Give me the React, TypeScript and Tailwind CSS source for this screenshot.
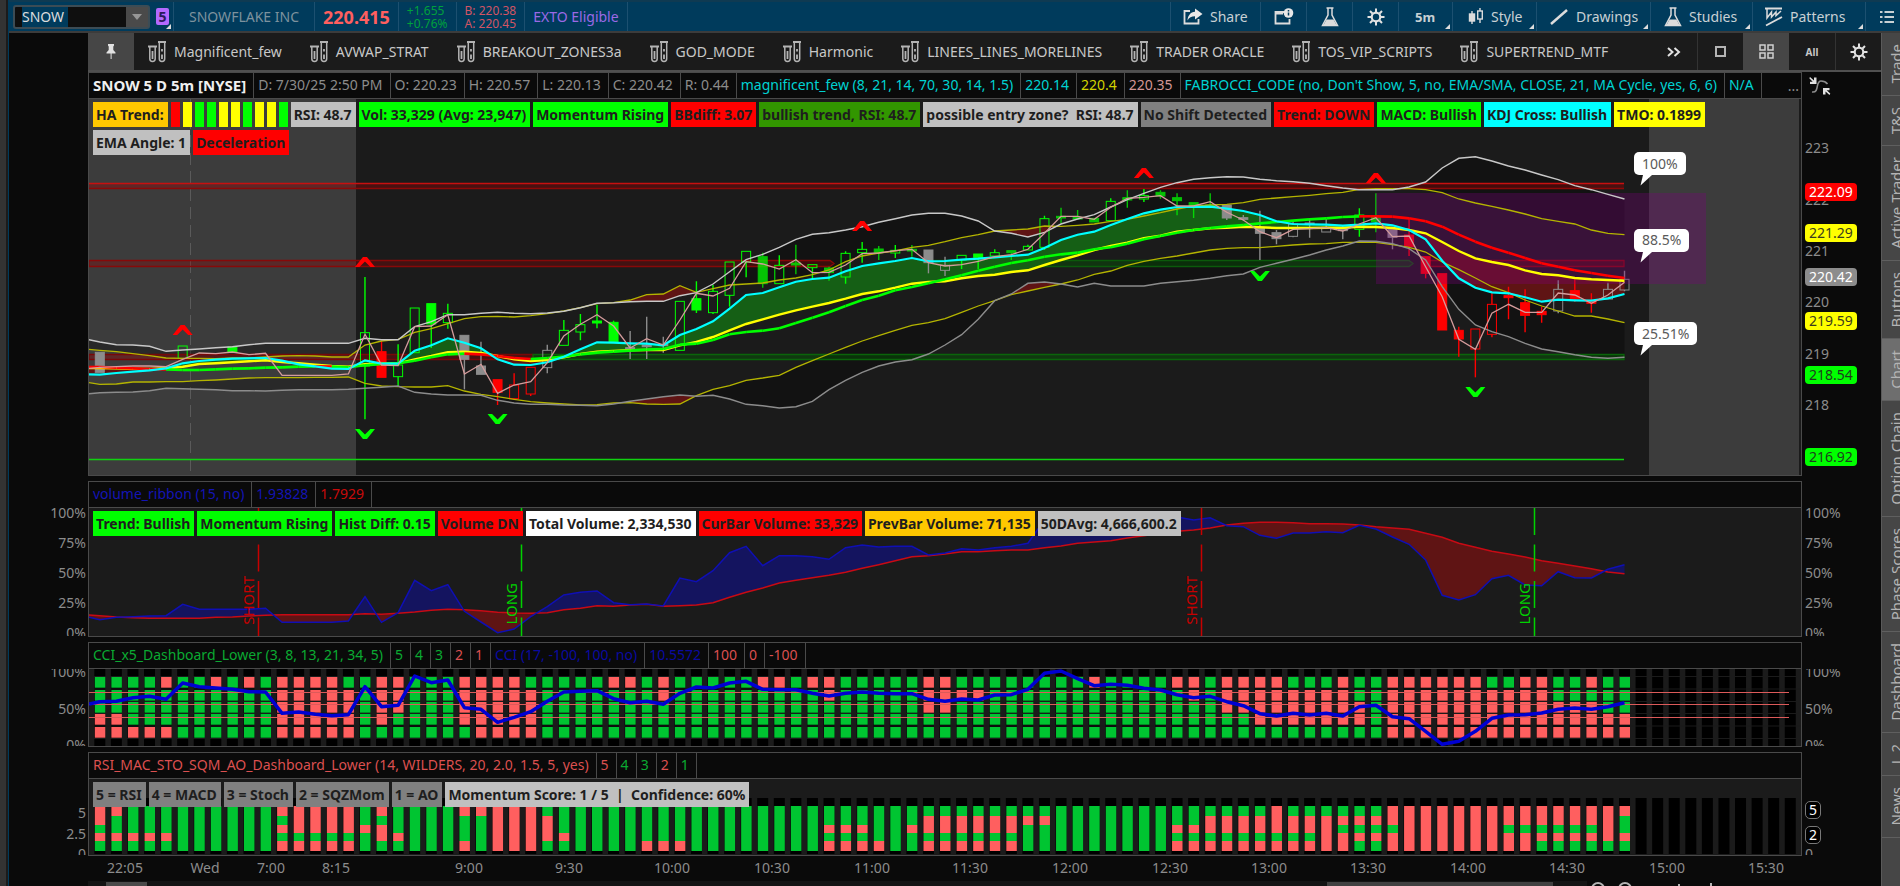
import React from "react";
import type { ReactNode } from "react";

/* ---------- series geometry ---------- */

const FIRST_X = 99.8;
const STEP = 16.573;
const px = (i: number) => FIRST_X + STEP * i;
const priceY = (v: number) => 150 + v / 3;
const lowerY = (v: number) => 470 + v / 3;

type Pt = [number, number];

const toPoints = (values: number[], scale: (v: number) => number): Pt[] =>
  values.map((v, i) => [i === 0 ? 89 : px(i - 1), scale(v)]);

const toAttr = (pts: Pt[]) => pts.map(([x, y]) => `${x.toFixed(1)},${y.toFixed(1)}`).join(" ");

/* Each array starts with the value at the left edge, then one value per bar. */
const bandUpper = [569, 576, 584, 585, 589, 604, 600, 597, 593, 590, 584, 580, 580, 580, 580, 580, 580, 565, 569, 569, 530, 515, 494, 494, 490, 487, 490, 491, 489, 484, 473, 460, 458, 455, 454, 454, 437, 428, 402, 365, 329, 313, 292, 268, 253, 248, 240, 230, 217, 206, 195, 190, 190, 198, 213, 243, 250, 261, 247, 222, 207, 194, 171, 149, 130, 112, 98, 88, 83, 80, 81, 88, 92, 95, 100, 107, 114, 119, 119, 119, 111, 96, 54, 25, 20, 33, 48, 60, 75, 89, 107, 119, 133, 147];
const channelUpper = [598, 601, 605, 611, 617, 624, 625, 625, 626, 624, 624, 621, 618, 617, 618, 621, 621, 585, 573, 568, 547, 536, 521, 506, 500, 499, 501, 497, 491, 483, 473, 461, 458, 450, 434, 432, 407, 427, 416, 405, 402, 399, 390, 384, 374, 360, 335, 318, 309, 303, 292, 286, 275, 263, 254, 243, 240, 237, 228, 229, 226, 222, 214, 208, 198, 188, 177, 168, 165, 163, 158, 148, 144, 140, 136, 131, 127, 118, 116, 116, 116, 119, 128, 147, 159, 169, 180, 192, 206, 214, 222, 240, 250, 254];
const channelLower = [698, 703, 702, 696, 696, 695, 695, 692, 690, 687, 684, 683, 683, 683, 682, 682, 681, 700, 708, 710, 711, 711, 707, 723, 733, 740, 748, 755, 759, 762, 765, 764, 759, 758, 762, 763, 762, 737, 718, 707, 691, 684, 676, 652, 632, 612, 592, 573, 557, 541, 526, 518, 506, 487, 468, 452, 434, 423, 412, 402, 390, 373, 363, 346, 334, 325, 318, 309, 300, 295, 293, 293, 289, 285, 282, 281, 277, 277, 277, 284, 292, 306, 336, 359, 384, 410, 428, 450, 468, 483, 498, 498, 507, 518];
const bandLower = [731, 728, 727, 726, 722, 715, 716, 718, 719, 722, 722, 723, 721, 719, 719, 719, 718, 715, 712, 708, 727, 732, 735, 735, 736, 751, 759, 763, 763, 765, 766, 767, 762, 754, 747, 740, 735, 739, 736, 747, 763, 767, 774, 770, 754, 719, 691, 667, 648, 636, 629, 612, 585, 554, 508, 452, 432, 400, 396, 402, 411, 400, 408, 408, 408, 400, 395, 391, 385, 377, 372, 352, 340, 328, 315, 300, 288, 273, 274, 281, 296, 330, 410, 478, 525, 545, 560, 580, 597, 605, 614, 622, 625, 622];
const emaFast = [673, 674, 669, 665, 661, 655, 640, 633, 629, 626, 625, 624, 632, 643, 649, 656, 657, 631, 641, 641, 602, 586, 565, 578, 595, 628, 644, 645, 637, 620, 598, 577, 578, 580, 581, 586, 555, 537, 514, 476, 435, 429, 412, 395, 387, 383, 364, 348, 340, 333, 324, 334, 333, 329, 326, 322, 318, 314, 294, 270, 254, 245, 225, 207, 190, 179, 171, 171, 170, 176, 183, 195, 214, 222, 223, 224, 227, 224, 220, 226, 240, 268, 332, 385, 413, 427, 430, 442, 455, 449, 451, 452, 445, 432];
const emaMid = [654, 654, 655, 656, 657, 655, 650, 642, 640, 637, 634, 631, 636, 640, 644, 648, 650, 643, 641, 640, 628, 618, 607, 605, 609, 618, 628, 633, 630, 622, 612, 605, 603, 601, 600, 600, 586, 576, 561, 541, 522, 508, 494, 481, 470, 459, 446, 432, 424, 413, 401, 396, 394, 385, 378, 374, 366, 361, 345, 330, 316, 300, 288, 278, 265, 257, 245, 240, 235, 233, 230, 232, 234, 234, 234, 233, 233, 230, 231, 234, 240, 250, 276, 303, 325, 336, 345, 361, 372, 376, 384, 388, 390, 392];
const emaSlow = [651, 651, 653, 655, 657, 658, 660, 660, 658, 656, 655, 653, 652, 650, 649, 650, 652, 646, 642, 640, 632, 622, 613, 611, 613, 618, 624, 627, 624, 620, 613, 608, 605, 602, 599, 597, 584, 581, 570, 553, 546, 542, 535, 519, 503, 487, 468, 450, 437, 421, 411, 400, 388, 376, 362, 350, 339, 331, 320, 313, 308, 298, 292, 281, 268, 258, 248, 240, 234, 229, 225, 220, 216, 212, 208, 205, 201, 199, 199, 200, 205, 214, 230, 254, 275, 293, 308, 324, 340, 350, 361, 369, 377, 384];
const closes = [655, 652, 650, 648, 648, 650, 628, 609, 611, 606, 614, 610, 676, 676, 676, 676, 672, 553, 645, 647, 530, 528, 494, 672, 643, 730, 705, 695, 638, 558, 523, 494, 528, 594, 566, 585, 510, 430, 438, 415, 335, 342, 357, 329, 368, 367, 345, 311, 309, 302, 298, 338, 348, 344, 334, 320, 314, 298, 250, 199, 199, 208, 172, 145, 142, 137, 168, 168, 155, 187, 210, 245, 263, 238, 236, 233, 243, 222, 203, 260, 258, 350, 440, 568, 598, 490, 463, 487, 487, 429, 435, 460, 435, 397];

const ribbonFast = [442, 449, 442, 440, 438, 437, 403, 418, 418, 418, 418, 415, 457, 457, 457, 457, 453, 380, 457, 428, 331, 362, 344, 424, 456, 488, 477, 440, 410, 375, 367, 363, 398, 404, 402, 408, 324, 335, 302, 248, 229, 287, 257, 257, 260, 268, 233, 225, 231, 229, 229, 255, 249, 236, 240, 233, 229, 220, 150, 140, 145, 150, 145, 148, 140, 142, 141, 150, 143, 167, 170, 196, 205, 189, 189, 185, 188, 166, 177, 201, 223, 270, 376, 390, 374, 326, 316, 345, 347, 305, 323, 324, 298, 284];
const ribbonSlow = [435, 437, 441, 443, 445, 445, 445, 445, 442, 441, 438, 436, 434, 434, 434, 434, 434, 431, 433, 430, 426, 421, 418, 419, 422, 427, 429, 430, 428, 419, 415, 407, 409, 405, 403, 409, 407, 405, 398, 382, 367, 354, 339, 331, 323, 316, 307, 295, 284, 272, 260, 257, 252, 245, 245, 242, 240, 240, 233, 228, 220, 216, 212, 204, 197, 190, 184, 180, 174, 165, 160, 157, 157, 158, 161, 161, 162, 165, 170, 174, 178, 190, 202, 220, 232, 244, 252, 261, 272, 280, 288, 296, 306, 311];
const cciLine = [702, 695, 694, 683, 679, 688, 639, 650, 654, 658, 665, 666, 730, 726, 733, 737, 734, 650, 710, 706, 618, 638, 630, 713, 718, 757, 742, 725, 694, 666, 664, 662, 686, 698, 694, 703, 670, 651, 654, 639, 634, 658, 659, 659, 670, 678, 670, 666, 670, 671, 671, 688, 694, 687, 690, 675, 674, 658, 610, 603, 626, 647, 643, 646, 655, 660, 674, 683, 679, 695, 707, 731, 738, 730, 735, 730, 738, 710, 706, 740, 746, 784, 823, 814, 784, 745, 735, 734, 729, 718, 714, 718, 710, 698];

type Candle = [number, number, number, number, number, "g" | "r" | "n", 0 | 1];
/* index, high, low, body top, body bottom, tone, filled */
const candles: Candle[] = [
  [0, 607, 667, 607, 667, "n", 1], [5, 588, 625, 588, 625, "g", 0], [8, 591, 607, 591, 607, "g", 1],
  [16, 381, 808, 548, 648, "g", 0], [17, 573, 682, 605, 682, "r", 1], [18, 583, 708, 645, 680, "g", 0],
  [19, 474, 608, 474, 608, "g", 0], [20, 461, 594, 461, 522, "g", 1], [21, 461, 536, 490, 518, "g", 0],
  [22, 556, 718, 556, 628, "n", 1], [23, 575, 673, 648, 673, "n", 1], [24, 689, 765, 689, 727, "r", 1],
  [25, 670, 746, 705, 746, "r", 0], [26, 652, 738, 652, 732, "r", 0], [27, 584, 670, 601, 653, "n", 0],
  [28, 510, 586, 541, 586, "g", 0], [29, 492, 571, 524, 546, "g", 0], [30, 464, 535, 513, 519, "g", 1],
  [31, 512, 575, 517, 575, "g", 1], [32, 543, 627, 593, 597, "n", 1], [33, 500, 627, 585, 590, "n", 1],
  [34, 560, 608, 583, 587, "n", 1], [35, 454, 601, 454, 601, "g", 0], [36, 394, 489, 446, 480, "g", 1],
  [37, 405, 492, 424, 488, "g", 0], [38, 336, 470, 336, 436, "g", 0], [39, 304, 382, 304, 336, "g", 0],
  [40, 308, 413, 320, 401, "g", 1], [41, 316, 401, 346, 401, "g", 0], [42, 284, 373, 339, 345, "g", 1],
  [43, 344, 385, 344, 353, "g", 0], [44, 350, 392, 354, 368, "g", 1], [45, 304, 401, 310, 381, "g", 0],
  [46, 276, 338, 298, 308, "g", 0], [47, 288, 330, 297, 308, "g", 1], [48, 285, 324, 301, 309, "g", 0],
  [49, 285, 320, 298, 303, "g", 1], [50, 300, 370, 300, 338, "n", 1], [51, 320, 378, 346, 361, "n", 0],
  [52, 316, 357, 316, 330, "g", 0], [53, 312, 357, 312, 322, "g", 1], [54, 298, 318, 308, 318, "g", 0],
  [55, 302, 330, 302, 308, "g", 1], [56, 284, 300, 289, 300, "g", 0], [57, 197, 300, 206, 292, "g", 0],
  [58, 173, 220, 199, 204, "g", 1], [59, 180, 207, 202, 207, "g", 1], [60, 205, 216, 205, 216, "g", 1],
  [61, 145, 212, 154, 212, "g", 0], [62, 121, 173, 143, 150, "g", 1], [63, 117, 156, 137, 147, "g", 0],
  [64, 121, 146, 127, 138, "g", 1], [65, 130, 196, 143, 152, "g", 1], [66, 158, 204, 158, 172, "g", 1],
  [67, 130, 172, 165, 172, "g", 1], [68, 165, 210, 165, 204, "n", 1], [69, 195, 212, 203, 208, "n", 1],
  [70, 182, 330, 235, 250, "n", 1], [71, 240, 283, 248, 266, "n", 1], [72, 213, 262, 222, 259, "n", 0],
  [73, 205, 263, 219, 223, "n", 1], [74, 207, 246, 232, 246, "n", 0], [75, 225, 268, 234, 242, "n", 1],
  [76, 175, 260, 195, 238, "g", 0], [77, 130, 247, 200, 215, "g", 1], [78, 237, 298, 237, 262, "n", 1],
  [79, 208, 318, 255, 290, "r", 1], [80, 320, 385, 320, 370, "r", 1], [81, 371, 540, 371, 540, "r", 1],
  [82, 530, 620, 541, 567, "r", 1], [83, 537, 682, 537, 597, "r", 0], [84, 430, 562, 463, 553, "r", 0],
  [85, 410, 508, 437, 443, "r", 1], [86, 418, 547, 458, 496, "r", 1], [87, 470, 518, 484, 494, "r", 1],
  [88, 391, 490, 418, 483, "n", 0], [89, 388, 455, 422, 446, "r", 1], [90, 430, 488, 455, 460, "r", 1],
  [91, 398, 447, 418, 447, "n", 0], [92, 362, 424, 388, 420, "n", 0],
];
const toneFill = { g: "#00ff00", r: "#ff0000", n: "#8c8c8c" };

/* Area between two lines, split where they cross. */
function areaBetween(a: Pt[], b: Pt[]) {
  const above: string[] = [];
  const below: string[] = [];
  for (let i = 0; i < a.length - 1; i++) {
    const [x0, a0] = a[i];
    const [x1, a1] = a[i + 1];
    const b0 = b[i][1];
    const b1 = b[i + 1][1];
    const d0 = b0 - a0;
    const d1 = b1 - a1;
    if (d0 * d1 >= 0) {
      (d0 + d1 >= 0 ? above : below).push(`M${x0} ${a0}L${x1} ${a1}L${x1} ${b1}L${x0} ${b0}Z`);
    } else {
      const t = d0 / (d0 - d1);
      const xc = x0 + (x1 - x0) * t;
      const yc = a0 + (a1 - a0) * t;
      (d0 > 0 ? above : below).push(`M${x0} ${a0}L${xc} ${yc}L${x0} ${b0}Z`);
      (d1 > 0 ? above : below).push(`M${xc} ${yc}L${x1} ${a1}L${x1} ${b1}Z`);
    }
  }
  return { above: above.join(""), below: below.join("") };
}

const pBandUpper = toPoints(bandUpper, priceY);
const pBandLower = toPoints(bandLower, priceY);
const pChanUpper = toPoints(channelUpper, priceY);
const pChanLower = toPoints(channelLower, priceY);
const pFast = toPoints(emaFast, priceY);
const pMid = toPoints(emaMid, priceY);
const pSlow = toPoints(emaSlow, priceY);
const pClose = toPoints(closes, priceY);
const upperSqueeze = areaBetween(pBandUpper, pChanUpper);
const lowerSqueeze = areaBetween(pChanLower, pBandLower);
const cloud = areaBetween(pFast, pMid);
const pRibFast = toPoints(ribbonFast, lowerY);
const pRibSlow = toPoints(ribbonSlow, lowerY);
const ribbon = areaBetween(pRibFast, pRibSlow);
const pCci = toPoints(cciLine, lowerY);

/* ---------- dashboards ---------- */

const cciRows = [
  "GGGGRGGRGRGRRRRGGRRGGGRRRRGGGGGRR" + "GRGGGGGRRGRRGGGGGRRGGGGGGGGRGGGGRRGRRR" + "RGGGRGGRRRRRRGGRRGGRGG",
  "GGGGGGGGGGGRRRRRGRRGGGRRRRRGGGGGG" + "GRGGGGGGGGGRGGGGGRRRRGGGGGGGGGGGGRGRRR" + "RRRRRGGRRRRRRRRRRGGGGG",
  "GGGGGGGGGGGRRRRRGRRGGGRRRRRGGGGGG" + "GGGGGGGGGGGGGGGGGRRGGGGGGGGGGGGGGGGRRR" + "RRRRRRGRRRRRRRRRRRRRGG",
  "RRGGGGGGGGGRRRRRGRGGGGRRRRRGGGGGG" + "GGGGGGGGGGGGGGGGGGGGGGGGGGGGGGGGGGGGGR" + "RRRRRRGRRRRRRRRRRRRRRR",
  "RRRRRGGGGGGRRRRRGGGGGGGRRRRGGGGGG" + "GGGGGGGGGGGGGGGGGGGGGGGGGGGGGGGGGGGGGG" + "GGGGGGGRRRRRRRRRRRRRRR",
];
const cciRowY = [677, 690, 702, 714, 727];

const span = (n: number, s: string) => Array<string>(n).fill(s);
const scoreCols = [
  "RRGRG", "RGGRG", ...span(3, "GGGRG"), ...span(6, "GGGGG"), "RGRGR", ...span(4, "RRRGR"), "GGRGG", "RGRRG", "GGGRG",
  ...span(3, "GGGGG"), "RGGGR", "RGGGG", ...span(3, "RRRRR"), "GRRRG", "GGGRG", ...span(4, "GGGGG"), ...span(3, "GGGGR"),
  ...span(8, "GGGGG"), ...span(3, "GGRGR"), "GGGGR", "GGGGG", "GGRGG", ...span(6, "GRRGR"), ...span(2, "GRGGG"),
  ...span(7, "GGGGG"), ...span(2, "GGRGR"), ...span(4, "GRRGR"), "RRRGR", ...span(2, "GRRGR"), "GRRRR", "GRGRR",
  ...span(2, "GRGRG"), "RRGRR", ...span(6, "RRRRR"), ...span(2, "RRGRR"), ...span(4, "RRGRG"), "RRRRG", "RGGRG",
];
const scoreY = [806, 816, 825, 833, 841, 851];
const UP = "#00c531";
const DOWN = "#ff5f5f";
const cellTone = (c: string) => (c === "G" ? UP : DOWN);
const allBars = Array.from({ length: 103 }, (_, i) => i);

/* ---------- icons ---------- */

const Tubes = () => (
  <svg viewBox="0 0 18 22" className="h-[22px] w-[18px] shrink-0" fill="none" stroke="#b4b4b4" strokeWidth="1.5">
    <path d="M0 5.500h9M10 1h8" strokeWidth="2" />
    <path d="M1.800 6v11.800a2.700 2.700 0 0 0 5.400 0V6M11.300 2v15.800a2.700 2.700 0 0 0 5.400 0V2" />
    <path d="M4.500 10v8M14 8v2.500M14 13.500v4.500" strokeWidth="1.800" />
  </svg>
);
const Flask = () => (
  <svg viewBox="0 0 18 20" className="h-5 w-[18px]" fill="none" stroke="#dcdcdc" strokeWidth="1.500">
    <path d="M5.500 1h7" />
    <path d="M7 1v7L1.500 18.500h15L11 8V1" />
    <path d="M5.500 12.500h7l3 5.500h-13z" fill="#dcdcdc" stroke="none" />
  </svg>
);
const Gear = ({ className }: { className: string }) => (
  <svg viewBox="0 0 18 18" className={className} stroke="#e2e2e2" fill="none">
    <circle cx="9" cy="9" r="4.300" strokeWidth="2.200" />
    {[0, 45, 90, 135, 180, 225, 270, 315].map((a) => (
      <path key={a} d="M9 4V0.500" strokeWidth="2" transform={`rotate(${a} 9 9)`} />
    ))}
  </svg>
);
const ShareIcon = () => (
  <svg viewBox="0 0 20 17" className="h-[17px] w-5">
    <path d="M7 3H1.500v12.500h14V11" fill="none" stroke="#dcdcdc" strokeWidth="1.800" />
    <path d="M12 0.500l7.500 5.500-7.500 5.500V8.300C8.500 8.300 6 9.500 4.500 12.500 4.800 7.500 7.500 4 12 3.700z" fill="#e8e8e8" />
  </svg>
);
const NoteIcon = () => (
  <svg viewBox="0 0 20 17" className="h-[17px] w-5">
    <path d="M10 4H1.500v11.500h14V11M1.500 5.500H9" fill="none" stroke="#dcdcdc" strokeWidth="1.800" />
    <circle cx="14.500" cy="5" r="4.800" fill="#e8e8e8" />
    <path d="M14.500 4.500v3M14.500 2v1.400" stroke="#003b5c" strokeWidth="1.500" />
  </svg>
);
const CandleIcon = () => (
  <svg viewBox="0 0 16 17" className="h-[17px] w-4" fill="none" stroke="#dcdcdc" strokeWidth="1.400">
    <path d="M4 3v13" />
    <rect x="1.500" y="6" width="5" height="7" fill="#dcdcdc" />
    <path d="M12 0v3M12 11v4" />
    <rect x="9.700" y="3" width="4.600" height="8" />
  </svg>
);
const LineIcon = () => (
  <svg viewBox="0 0 20 18" className="h-[18px] w-5">
    <path d="M2 16L18 2" stroke="#dcdcdc" strokeWidth="2.500" />
  </svg>
);
const PatternIcon = () => (
  <svg viewBox="0 0 18 20" className="h-5 w-[18px]" fill="none" stroke="#dcdcdc" strokeWidth="1.800">
    <path d="M0 1.500h17M1 18.500L17 10" />
    <path d="M2 2v9l4.500-6v5L11 5v3.500L16 4" strokeWidth="1.500" />
  </svg>
);
const ListIcon = () => (
  <svg viewBox="0 0 14 14" className="h-[14px] w-[14px]" stroke="#c8d0d4" strokeWidth="2">
    <path d="M0 2h2.500M0 7h2.500M0 12h2.500M4.500 2H14M4.500 7H14M4.500 12H14" />
  </svg>
);
const PinIcon = () => (
  <svg viewBox="0 0 10 16" className="h-4 w-[10px]" fill="#e2e2e2">
    <path d="M2 0h6v1.500L7.300 2.500V6l2.200 2.500V9.500H5.600V15h-1V9.500H0.500V8.500L2.700 6V2.500L2 1.500z" />
  </svg>
);
const GridIcon = () => (
  <svg viewBox="0 0 15 15" className="h-[15px] w-[15px]" fill="none" stroke="#d0d0d0" strokeWidth="1.500">
    <path d="M1 1h5v5H1zM9 1h5v5H9zM1 9h5v5H1zM9 9h5v5H9z" />
  </svg>
);
const ReturnIcon = () => (
  <svg viewBox="0 0 22 20" className="h-5 w-[22px]">
    <path d="M3 16c8 1 3-11 9-11 3 0 5 1 6.500 3" fill="none" stroke="#8c8c8c" strokeWidth="1.600" />
    <path d="M1 1l4 3.500V1.500h2.500V8H1V5.800h2.700L0.300 2.300zM20.500 19l-4-3.500v3H14V12h6.500v2.200h-2.800l3.600 3.400z" fill="#e2e2e2" />
  </svg>
);
const Corner = () => (
  <svg viewBox="0 0 5 5" className="absolute right-[2px] bottom-[2px] h-[5px] w-[5px]">
    <path d="M5 0v5H0z" fill="#dcdcdc" />
  </svg>
);

/* ---------- building blocks ---------- */

function Tool({ icon, label, corner, className }: { icon?: ReactNode; label?: string; corner?: boolean; className: string }) {
  return (
    <button type="button" aria-label={label ?? "Tool"} className={`relative flex h-full items-center gap-[7px] border-l border-[#1c5070] ${className}`}>
      {icon}
      {label && <span>{label}</span>}
      {corner && <Corner />}
    </button>
  );
}

function Cell({ children, className }: { children: ReactNode; className: string }) {
  return <span className={`flex h-full shrink-0 items-center border-r border-[#4a4a4a] pr-[7px] pb-[2px] pl-1 whitespace-pre ${className}`}>{children}</span>;
}

function Tag({ children, className }: { children: ReactNode; className: string }) {
  return <span className={`flex h-[25px] shrink-0 items-center pr-1 pl-[3px] font-bold whitespace-pre text-[#1e1e1e] ${className}`}>{children}</span>;
}

type AxisMark = { at: number; text: string; badge?: string };

function Axis({ side, marks, top, height, corner }: { side: "left" | "right"; marks: AxisMark[]; top: number; height: number; corner?: ReactNode }) {
  return (
    <div className="flex w-[79px] shrink-0 flex-col text-[#8c8c8c]">
      <div className="flex h-[27px] shrink-0 items-center pl-[7px]">{corner}</div>
      <div className="relative mb-px grow overflow-hidden">
        {marks.map((m) => (
          <span
            key={m.text}
            className={`absolute -translate-y-1/2 ${side === "left" ? "right-[2px]" : "left-[3px]"} ${m.badge ?? ""}`}
            style={{ top: `${((m.at - top) / height) * 100}%` }}
          >
            {m.text}
          </span>
        ))}
      </div>
    </div>
  );
}

type PaneProps = {
  className: string;
  header: ReactNode;
  left: AxisMark[];
  right: AxisMark[];
  top: number;
  height: number;
  corner?: ReactNode;
  overlay?: ReactNode;
  label: string;
  children: ReactNode;
};

function Pane({ className, header, left, right, top, height, corner, overlay, label, children }: PaneProps) {
  return (
    <section aria-label={label} className={`flex ${className}`}>
      <Axis side="left" marks={left} top={top} height={height} />
      <div className="flex min-w-0 grow flex-col border border-[#4a4a4a]">
        <div className="flex h-[26px] shrink-0 items-center overflow-hidden border-b border-[#4a4a4a] bg-[#0a0a0a]">{header}</div>
        <div className="relative min-h-0 grow overflow-hidden bg-[#1b1b1b]">
          <svg viewBox={`89 ${top} 1712 ${height}`} preserveAspectRatio="none" className="absolute inset-0 h-full w-full">
            {children}
          </svg>
          {overlay}
        </div>
      </div>
      <Axis side="right" marks={right} top={top} height={height} corner={corner} />
    </section>
  );
}

function Callout({ x, y, children }: { x: number; y: number; children: string }) {
  return (
    <div className="absolute" style={{ left: `${((x - 89) / 1712) * 100}%`, top: `${((y - 99) / 376) * 100}%` }}>
      <div className="flex h-[23px] items-center rounded-[5px] bg-white px-2 text-[#5a5a5a]">{children}</div>
      <svg viewBox="0 0 12 11" className="ml-[6px] h-[11px] w-3">
        <path d="M3 0h9L0.500 10.500z" fill="#fff" />
      </svg>
    </div>
  );
}

function SignalText({ x, className, children }: { x: number; className: string; children: string }) {
  return (
    <span
      className={`absolute bottom-[11px] rotate-180 text-[15px] leading-5 [writing-mode:vertical-rl] ${className}`}
      style={{ right: `${((1801 - x) / 1712) * 100}%` }}
    >
      {children}
    </span>
  );
}

/* ---------- charts ---------- */

function PriceChart() {
  const slowRed = (i: number) => i <= 3 || (i >= 22 && i <= 25) || i >= 76;
  return (
    <>
      <rect x="89" y="99" width="267" height="376" fill="#3c3c3c" />
      <rect x="1649" y="99" width="150" height="376" fill="#3c3c3c" />
      <path d="M190.500 99V475" stroke="#5a5a5a" strokeDasharray="12 6" />
      <path d={upperSqueeze.above + lowerSqueeze.above} fill="#000" fillOpacity="0.300" />
      <path d={upperSqueeze.below + lowerSqueeze.below} fill="#5f1414" />

      <rect x="89" y="184" width="1535" height="5" fill="#a00000" fillOpacity="0.350" />
      <path d="M89 183.500H1624" stroke="#c81010" strokeWidth="1.600" />
      <path d="M89 188.500H1624" stroke="#8c0808" strokeWidth="1.500" />
      <path d="M89 260.500H830l4 3-4 3H89zM1424 260.500h200v6h-200z" fill="#a00000" fillOpacity="0.300" stroke="#870808" strokeWidth="1.300" />
      <path d="M925 260.500H1409l4 3-4 3H925z" fill="#006400" fillOpacity="0.350" stroke="#0b5a0b" strokeWidth="1.300" />
      <path d="M89 354.500H533v5H89z" fill="#a00000" fillOpacity="0.350" stroke="#780808" strokeWidth="1.300" />
      <path d="M533 354.500H1624v5H533z" fill="#006400" fillOpacity="0.400" stroke="#0a640a" strokeWidth="1.300" />
      <path d="M89 459.500H1624" stroke="#10d210" strokeWidth="1.500" />

      <path d={cloud.above} fill="#155f15" />
      <path d={cloud.below} fill="#5f1414" />

      {candles.map(([i, hi, lo, top, bottom, tone, filled]) => {
        const color = toneFill[tone];
        const x = px(i);
        const y0 = priceY(top);
        const y1 = priceY(bottom);
        return (
          <g key={i} stroke={color} opacity={tone === "g" && filled && i > 39 && i !== 53 ? 0.75 : 1}>
            <path d={`M${x} ${priceY(hi)}V${y0}M${x} ${y1}V${priceY(lo)}`} strokeWidth="1.400" />
            <rect x={x - 4.5} y={y0} width="9" height={Math.max(1, y1 - y0)} fill={filled ? color : "none"} strokeWidth="1" />
          </g>
        );
      })}

      <rect x="1376" y="193" width="330" height="91" fill="#800080" fillOpacity="0.300" />

      <g fill="none">
        <polyline points={toAttr(pChanLower)} stroke="#b4b400" strokeWidth="1.300" />
        <polyline points={toAttr(pChanUpper)} stroke="#b4b400" strokeWidth="1.300" />
        <polyline points={toAttr(pBandLower)} stroke="#8c8c8c" strokeWidth="1.400" />
        <polyline points={toAttr(pBandUpper)} stroke="#c8c8c8" strokeWidth="1.400" />
        <polyline points={toAttr(pMid)} stroke="#ffff00" strokeWidth="2.400" />
        {pSlow.slice(0, -1).map((p, i) => (
          <path key={i} d={`M${p[0]} ${p[1]}L${pSlow[i + 1][0]} ${pSlow[i + 1][1]}`} stroke={slowRed(i - 1) || i === 14 ? "#ff0000" : "#00ff00"} strokeWidth="2.600" />
        ))}
        <polyline points={toAttr(pFast)} stroke="#00ffff" strokeWidth="2.200" />
        <polyline points={toAttr(pClose)} stroke="#d49c9c" strokeWidth="1.300" />
      </g>

      {([[5, 325], [16, 257], [46, 221], [63, 168], [77, 173]] as Pt[]).map(([i, y]) => (
        <path key={i} d={`M${px(i) - 10} ${y + 10}L${px(i) - 2} ${y}H${px(i) + 2}L${px(i) + 10} ${y + 10}H${px(i) + 5.5}L${px(i)} ${y + 4.5}L${px(i) - 5.5} ${y + 10}Z`} fill="#ff0000" />
      ))}
      {([[16, 429], [24, 414], [70, 271], [83, 387]] as Pt[]).map(([i, y]) => (
        <path key={i} d={`M${px(i) - 10} ${y}L${px(i) - 2} ${y + 10}H${px(i) + 2}L${px(i) + 10} ${y}H${px(i) + 5.5}L${px(i)} ${y + 5.5}L${px(i) - 5.5} ${y}Z`} fill="#00ff00" />
      ))}
    </>
  );
}

function RibbonChart() {
  return (
    <>
      <path d={ribbon.above} fill="#14145f" />
      <path d={ribbon.below} fill="#5f1414" />
      <polyline points={toAttr(pRibSlow)} fill="none" stroke="#c80a14" strokeWidth="1.500" />
      <polyline points={toAttr(pRibFast)} fill="none" stroke="#0f0fb4" strokeWidth="1.500" />
      <path d="M258.500 508V637M1201.500 508V637" stroke="#c80000" strokeWidth="1.500" strokeDasharray="27 9.500" />
      <path d="M521.500 508V637M1534.500 508V637" stroke="#00d200" strokeWidth="1.500" strokeDasharray="27 9.500" />
    </>
  );
}

function CciChart() {
  return (
    <>
      {allBars.map((i) => (
        <g key={i}>
          <rect x={px(i) - 5.5} y="669" width="11" height="77" fill="#000" />
          {i < 93 && cciRows.map((row, r) => <rect key={r} x={px(i) - 5} y={cciRowY[r]} width="10.500" height="10.700" fill={cellTone(row[i])} />)}
        </g>
      ))}
      <path d="M89 676.500H1801M89 689H1801M89 701.500H1801M89 713.500H1801M89 726H1801M89 738.500H1801" stroke="#1b1b1b" strokeWidth="1" />
      <path d="M89 692.500H1789M89 704.500H1789M89 717.500H1789" stroke="#dc5a5a" strokeWidth="1.200" />
      <polyline points={toAttr(pCci)} fill="none" stroke="#0000d2" strokeWidth="3.500" strokeLinejoin="round" />
    </>
  );
}

function ScoreChart() {
  return (
    <>
      {allBars.map((i) => (
        <g key={i}>
          <rect x={px(i) - 5.5} y="798" width="11" height="56" fill="#000" />
          {scoreCols[i]?.split("").map((c, r) => (
            <rect key={r} x={px(i) - 5} y={scoreY[r]} width="10.500" height={scoreY[r + 1] - scoreY[r]} fill={cellTone(c)} />
          ))}
        </g>
      ))}
    </>
  );
}

/* ---------- page data ---------- */

const tabs = ["Magnificent_few", "AVWAP_STRAT", "BREAKOUT_ZONES3a", "GOD_MODE", "Harmonic", "LINEES_LINES_MORELINES", "TRADER ORACLE", "TOS_VIP_SCRIPTS", "SUPERTREND_MTF"];
const sideTabs = ["Trade", "T&S", "Active Trader", "Buttons", "Chart", "Option Chain", "Phase Scores", "Dashboard", "L 2", "News"];
const times: [number, string][] = [
  [125, "22:05"], [205, "Wed"], [271, "7:00"], [336, "8:15"], [469, "9:00"], [569, "9:30"], [672, "10:00"], [772, "10:30"], [872, "11:00"],
  [970, "11:30"], [1070, "12:00"], [1170, "12:30"], [1269, "13:00"], [1368, "13:30"], [1468, "14:00"], [1567, "14:30"], [1667, "15:00"], [1766, "15:30"],
];
const haTrend = ["r", "y", "g", "g", "y", "y", "g", "y", "y", "g"];
const haTone: Record<string, string> = { r: "bg-[#ff0000]", y: "bg-[#ffff00]", g: "bg-[#00ff00]" };

const badge = "rounded-[4px] px-1 leading-[18px]";
const priceMarks: AxisMark[] = [
  { at: 148, text: "223" },
  { at: 200, text: "222" },
  { at: 251, text: "221" },
  { at: 302, text: "220" },
  { at: 354, text: "219" },
  { at: 405, text: "218" },
  { at: 192, text: "222.09", badge: `${badge} bg-[#ff0000] text-white` },
  { at: 233, text: "221.29", badge: `${badge} bg-[#ffff00] text-[#3c3c1e]` },
  { at: 277, text: "220.42", badge: `${badge} bg-[#8c8c8c] text-white` },
  { at: 321, text: "219.59", badge: `${badge} bg-[#ffff00] text-[#3c3c1e]` },
  { at: 375, text: "218.54", badge: `${badge} bg-[#00ff00] text-[#1e3c1e]` },
  { at: 457, text: "216.92", badge: `${badge} bg-[#00ff00] text-[#1e3c1e]` },
];
const volMarks: AxisMark[] = [
  { at: 513, text: "100%" },
  { at: 543, text: "75%" },
  { at: 573, text: "50%" },
  { at: 603, text: "25%" },
  { at: 633, text: "0%" },
];
const cciMarks: AxisMark[] = [
  { at: 672, text: "100%" },
  { at: 709, text: "50%" },
  { at: 745, text: "0%" },
];
const outline = "rounded-[5px] border border-[#787878] bg-black px-[3px] leading-4 text-white";

export default function App() {
  return (
    <div className="flex min-h-screen w-full overflow-hidden bg-[#0a0a0a] font-['Noto_Sans','Open_Sans',sans-serif] text-[14px] leading-5 text-[#b4b4b4]">
      <div className="w-2 shrink-0 border-r-2 border-[#1b1b1b] bg-[#333333]" />
      <div className="flex min-w-0 grow flex-col border-l border-[#003b5c]">
        <header className="flex h-[33px] shrink-0 items-center border-t-2 border-b-2 border-t-[#0f3a52] border-b-[#3c3c3c] bg-[#003b5c]">
          <div className="ml-1 flex h-6 w-[137px] shrink-0 items-center rounded-[3px] border-2 border-[#3c4c55] bg-[#0f0f0f] pl-[7px]">
            <label htmlFor="symbol" className="sr-only">Symbol</label>
            <input id="symbol" defaultValue="SNOW" className="h-5 w-[46px] bg-[#003b5c] text-[#dcdcdc] outline-none" />
            <button type="button" aria-label="Open symbol list" className="ml-auto flex h-5 w-[22px] items-center justify-center bg-[#4a4a4a]">
              <svg viewBox="0 0 10 6" className="h-[6px] w-[10px]"><path d="M0 0h10L5 6z" fill="#969696" /></svg>
            </button>
          </div>
          <div className="relative flex h-full w-6 shrink-0 items-center border-r border-[#1c5070] pl-[6px]">
            <button type="button" aria-label="Link group 5" className="flex h-[17px] w-[13px] items-center justify-center rounded-[2px] bg-[#b469ff] font-bold text-[#2a1a5a]">5</button>
            <Corner />
          </div>
          <div className="flex h-full shrink-0 items-center border-r border-[#1c5070] px-[15px] text-[#7d929e]">SNOWFLAKE INC</div>
          <div className="flex h-full shrink-0 items-center border-r border-[#1c5070] px-2 text-[18px] font-bold text-[#ff5f5f]">220.415</div>
          <div className="flex h-full shrink-0 flex-col justify-center border-r border-[#1c5070] px-2 text-[12px] leading-[13px] text-[#00a03c]">
            <span>+1.655</span>
            <span>+0.76%</span>
          </div>
          <div className="flex h-full shrink-0 flex-col justify-center border-r border-[#1c5070] px-2 text-[12px] leading-[13px] text-[#d25564]">
            <span>B: 220.38</span>
            <span>A: 220.45</span>
          </div>
          <div className="flex h-full shrink-0 items-center border-r border-[#1c5070] px-2 text-[#9b69e6]">EXTO Eligible</div>
          <div className="ml-auto flex h-full shrink-0 items-center text-[#c8d0d4]">
            <Tool icon={<ShareIcon />} label="Share" className="w-[90px] pl-3" />
            <Tool icon={<NoteIcon />} className="w-[46px] justify-center" />
            <Tool icon={<Flask />} className="w-[46px] justify-center" />
            <Tool icon={<Gear className="h-[18px] w-[18px]" />} className="w-[46px] justify-center" />
            <Tool label="5m" corner className="w-[54px] pl-4 text-[13px] font-bold" />
            <Tool icon={<CandleIcon />} label="Style" corner className="w-[84px] pl-[15px]" />
            <Tool icon={<LineIcon />} label="Drawings" corner className="w-[114px] pl-3" />
            <Tool icon={<Flask />} label="Studies" corner className="w-[102px] pl-[13px]" />
            <Tool icon={<PatternIcon />} label="Patterns" corner className="w-[113px] pl-3" />
            <Tool icon={<ListIcon />} className="w-[35px] pl-[14px]" />
          </div>
        </header>

        <div className="flex min-h-0 grow">
          <div className="flex min-w-0 grow flex-col">
            <nav aria-label="Studies sets" className="ml-[79px] flex h-[39px] shrink-0 items-center border-b-2 border-[#505050] bg-[#1b1b1b] text-[#c8c8c8]">
              <button type="button" aria-label="Pin" className="mr-[14px] flex h-full w-[46px] shrink-0 items-center justify-center bg-[#464646]"><PinIcon /></button>
              <div className="flex min-w-0 grow items-center gap-7 overflow-hidden">
                {tabs.map((t) => (
                  <button key={t} type="button" className="flex shrink-0 items-center gap-2"><Tubes />{t}</button>
                ))}
              </div>
              <button type="button" aria-label="More sets" className="flex h-full w-[46px] shrink-0 items-center justify-center">
                <svg viewBox="0 0 14 10" className="h-[10px] w-[14px]" fill="none" stroke="#e2e2e2" strokeWidth="2"><path d="M1 1l4.500 4L1 9M7.500 1L12 5 7.500 9" /></svg>
              </button>
              <button type="button" aria-label="Single view" className="flex h-full w-[46px] shrink-0 items-center justify-center border-l border-[#333333]">
                <span className="h-[11px] w-[11px] border-2 border-[#b4b4b4]" />
              </button>
              <button type="button" aria-label="Grid view" className="flex h-full w-[46px] shrink-0 items-center justify-center bg-[#464646]"><GridIcon /></button>
              <button type="button" className="flex h-full w-[46px] shrink-0 items-center justify-center text-[10px] font-bold">All</button>
              <button type="button" aria-label="Settings" className="flex h-full w-[46px] shrink-0 items-center justify-center border-l border-[#333333]"><Gear className="h-[18px] w-[18px]" /></button>
            </nav>

            <main className="flex grow flex-col gap-[5px]">
              <Pane
                label="SNOW price"
                className="grow basis-[404px]"
                top={99}
                height={376}
                left={[]}
                right={priceMarks}
                corner={<ReturnIcon />}
                header={
                  <>
                    <Cell className="text-[15px] font-bold text-[#f0f0f0]">SNOW 5 D 5m [NYSE]</Cell>
                    <Cell className="text-[#8c8c8c]">D: 7/30/25 2:50 PM</Cell>
                    <Cell className="text-[#8c8c8c]">O: 220.23</Cell>
                    <Cell className="text-[#8c8c8c]">H: 220.57</Cell>
                    <Cell className="text-[#8c8c8c]">L: 220.13</Cell>
                    <Cell className="text-[#8c8c8c]">C: 220.42</Cell>
                    <Cell className="text-[#8c8c8c]">R: 0.44</Cell>
                    <Cell className="text-[#00d2d2]">magnificent_few (8, 21, 14, 70, 30, 14, 1.5)</Cell>
                    <Cell className="text-[#00d2d2]">220.14</Cell>
                    <Cell className="text-[#d2d200]">220.4</Cell>
                    <Cell className="text-[#d29696]">220.35</Cell>
                    <Cell className="text-[#00d2d2]">FABROCCI_CODE (no, Don't Show, 5, no, EMA/SMA, CLOSE, 21, MA Cycle, yes, 6, 6)</Cell>
                    <Cell className="text-[#00d2d2]">N/A</Cell>
                    <span className="ml-auto pr-[2px] text-[#8c8c8c]">...</span>
                  </>
                }
                overlay={
                  <>
                    <div className="absolute top-[3px] left-[4px] flex flex-col gap-[3px]">
                      <div className="flex gap-[3px]">
                        <Tag className="bg-[#ffc800]">HA Trend:</Tag>
                        <div className="flex gap-[3px]">
                          {haTrend.map((t, i) => <span key={i} className={`h-[25px] w-[9px] ${haTone[t]}`} />)}
                        </div>
                        <Tag className="bg-[#c0c0c0]">RSI: 48.7</Tag>
                        <Tag className="bg-[#00ff00]">Vol: 33,329 (Avg: 23,947)</Tag>
                        <Tag className="bg-[#00ff00]">Momentum Rising</Tag>
                        <Tag className="bg-[#ff0000]">BBdiff: 3.07</Tag>
                        <Tag className="bg-[#329600]">bullish trend, RSI: 48.7</Tag>
                        <Tag className="bg-[#c0c0c0]">possible entry zone?  RSI: 48.7</Tag>
                        <Tag className="bg-[#808080]">No Shift Detected</Tag>
                        <Tag className="bg-[#ff0000]">Trend: DOWN</Tag>
                        <Tag className="bg-[#00ff00]">MACD: Bullish</Tag>
                        <Tag className="bg-[#00ffff]">KDJ Cross: Bullish</Tag>
                        <Tag className="bg-[#ffff00]">TMO: 0.1899</Tag>
                      </div>
                      <div className="flex gap-[3px]">
                        <Tag className="bg-[#c0c0c0]">EMA Angle: 1</Tag>
                        <Tag className="bg-[#ff0000]">Deceleration</Tag>
                      </div>
                    </div>
                    <Callout x={1634} y={152}>100%</Callout>
                    <Callout x={1634} y={229}>88.5%</Callout>
                    <Callout x={1634} y={322}>25.51%</Callout>
                  </>
                }
              >
                <PriceChart />
              </Pane>

              <Pane
                label="Volume ribbon"
                className="grow basis-[156px]"
                top={508}
                height={128}
                left={volMarks}
                right={volMarks}
                header={
                  <>
                    <Cell className="text-[#1414b4]">volume_ribbon (15, no)</Cell>
                    <Cell className="text-[#1414b4]">1.93828</Cell>
                    <Cell className="text-[#c80a0a]">1.7929</Cell>
                  </>
                }
                overlay={
                  <>
                    <div className="absolute top-[3px] left-[4px] flex gap-[3px]">
                      <Tag className="bg-[#00ff00]">Trend: Bullish</Tag>
                      <Tag className="bg-[#00ff00]">Momentum Rising</Tag>
                      <Tag className="bg-[#00ff00]">Hist Diff: 0.15</Tag>
                      <Tag className="bg-[#ff0000]">Volume DN</Tag>
                      <Tag className="bg-white">Total Volume: 2,334,530</Tag>
                      <Tag className="bg-[#ff0000]">CurBar Volume: 33,329</Tag>
                      <Tag className="bg-[#ffc800]">PrevBar Volume: 71,135</Tag>
                      <Tag className="bg-[#c0c0c0]">50DAvg: 4,666,600.2</Tag>
                    </div>
                    <SignalText x={258} className="text-[#c80000]">SHORT</SignalText>
                    <SignalText x={521} className="text-[#00d200]">LONG</SignalText>
                    <SignalText x={1201} className="text-[#c80000]">SHORT</SignalText>
                    <SignalText x={1534} className="text-[#00d200]">LONG</SignalText>
                  </>
                }
              >
                <RibbonChart />
              </Pane>

              <Pane
                label="CCI dashboard"
                className="grow basis-[105px]"
                top={669}
                height={77}
                left={cciMarks}
                right={cciMarks}
                header={
                  <>
                    <Cell className="text-[#0aaa32]">CCI_x5_Dashboard_Lower (3, 8, 13, 21, 34, 5)</Cell>
                    <Cell className="text-[#0aaa32]">5</Cell>
                    <Cell className="text-[#0aaa32]">4</Cell>
                    <Cell className="text-[#0aaa32]">3</Cell>
                    <Cell className="text-[#dc5050]">2</Cell>
                    <Cell className="text-[#dc5050]">1</Cell>
                    <Cell className="text-[#0a0aa0]">CCI (17, -100, 100, no)</Cell>
                    <Cell className="text-[#0a0aa0]">10.5572</Cell>
                    <Cell className="text-[#dc5050]">100</Cell>
                    <Cell className="text-[#dc5050]">0</Cell>
                    <Cell className="text-[#dc5050]">-100</Cell>
                  </>
                }
              >
                <CciChart />
              </Pane>

              <Pane
                label="Momentum dashboard"
                className="grow basis-[104px]"
                top={779}
                height={76}
                left={[{ at: 813, text: "5" }, { at: 834, text: "2.5" }, { at: 854, text: "0" }]}
                right={[{ at: 810, text: "5", badge: outline }, { at: 835, text: "2", badge: outline }, { at: 854, text: "0" }]}
                header={
                  <>
                    <Cell className="text-[#dc5050]">RSI_MAC_STO_SQM_AO_Dashboard_Lower (14, WILDERS, 20, 2.0, 1.5, 5, yes)</Cell>
                    <Cell className="text-[#dc5050]">5</Cell>
                    <Cell className="text-[#0aaa32]">4</Cell>
                    <Cell className="text-[#0aaa32]">3</Cell>
                    <Cell className="text-[#dc5050]">2</Cell>
                    <Cell className="text-[#0aaa32]">1</Cell>
                  </>
                }
                overlay={
                  <div className="absolute top-[3px] left-[4px] flex gap-[3px]">
                    <Tag className="bg-[#808080]">5 = RSI</Tag>
                    <Tag className="bg-[#808080]">4 = MACD</Tag>
                    <Tag className="bg-[#808080]">3 = Stoch</Tag>
                    <Tag className="bg-[#808080]">2 = SQZMom</Tag>
                    <Tag className="bg-[#808080]">1 = AO</Tag>
                    <Tag className="bg-[#c0c0c0]">Momentum Score: 1 / 5  |  Confidence: 60%</Tag>
                  </div>
                }
              >
                <ScoreChart />
              </Pane>
            </main>

            <div className="relative mx-[79px] h-[25px] shrink-0 text-[#8c8c8c]">
              {times.map(([x, t]) => (
                <span key={t} className="absolute top-[2px] -translate-x-1/2" style={{ left: `${((x - 88) / 1714) * 100}%` }}>{t}</span>
              ))}
            </div>
            <div className="flex h-[5px] shrink-0 overflow-hidden bg-[#0a0a0a] pl-[79px]">
              <div className="flex grow items-end bg-[#141414] pl-[18px]">
                <span className="h-1 w-[41px] bg-[#4a4a4a]" />
                <span className="mr-[34px] ml-auto h-1 w-[226px] bg-[#414141]" />
              </div>
              <svg viewBox="0 0 294 5" className="h-[5px] w-[294px] shrink-0" fill="none" stroke="#b4b4b4" strokeWidth="2">
                <circle cx="11" cy="8" r="6" />
                <circle cx="38" cy="8" r="6" />
                <path d="M92 3v2M124 2v3" />
              </svg>
            </div>
          </div>

          <aside className="w-[19px] shrink-0 overflow-hidden border-l border-[#5a5a5a] bg-[#464646] text-[15px] text-[#b4b4b4]">
            {sideTabs.map((t) => (
              <button
                key={t}
                type="button"
                className={`flex w-6 items-center border-b border-[#5f5f5f] py-[11px] pl-[2px] ${t === "Chart" ? "bg-[#6e6e6e]" : ""}`}
              >
                <span className="rotate-180 leading-6 whitespace-nowrap [writing-mode:vertical-rl]">{t}</span>
              </button>
            ))}
          </aside>
        </div>
      </div>
    </div>
  );
}
